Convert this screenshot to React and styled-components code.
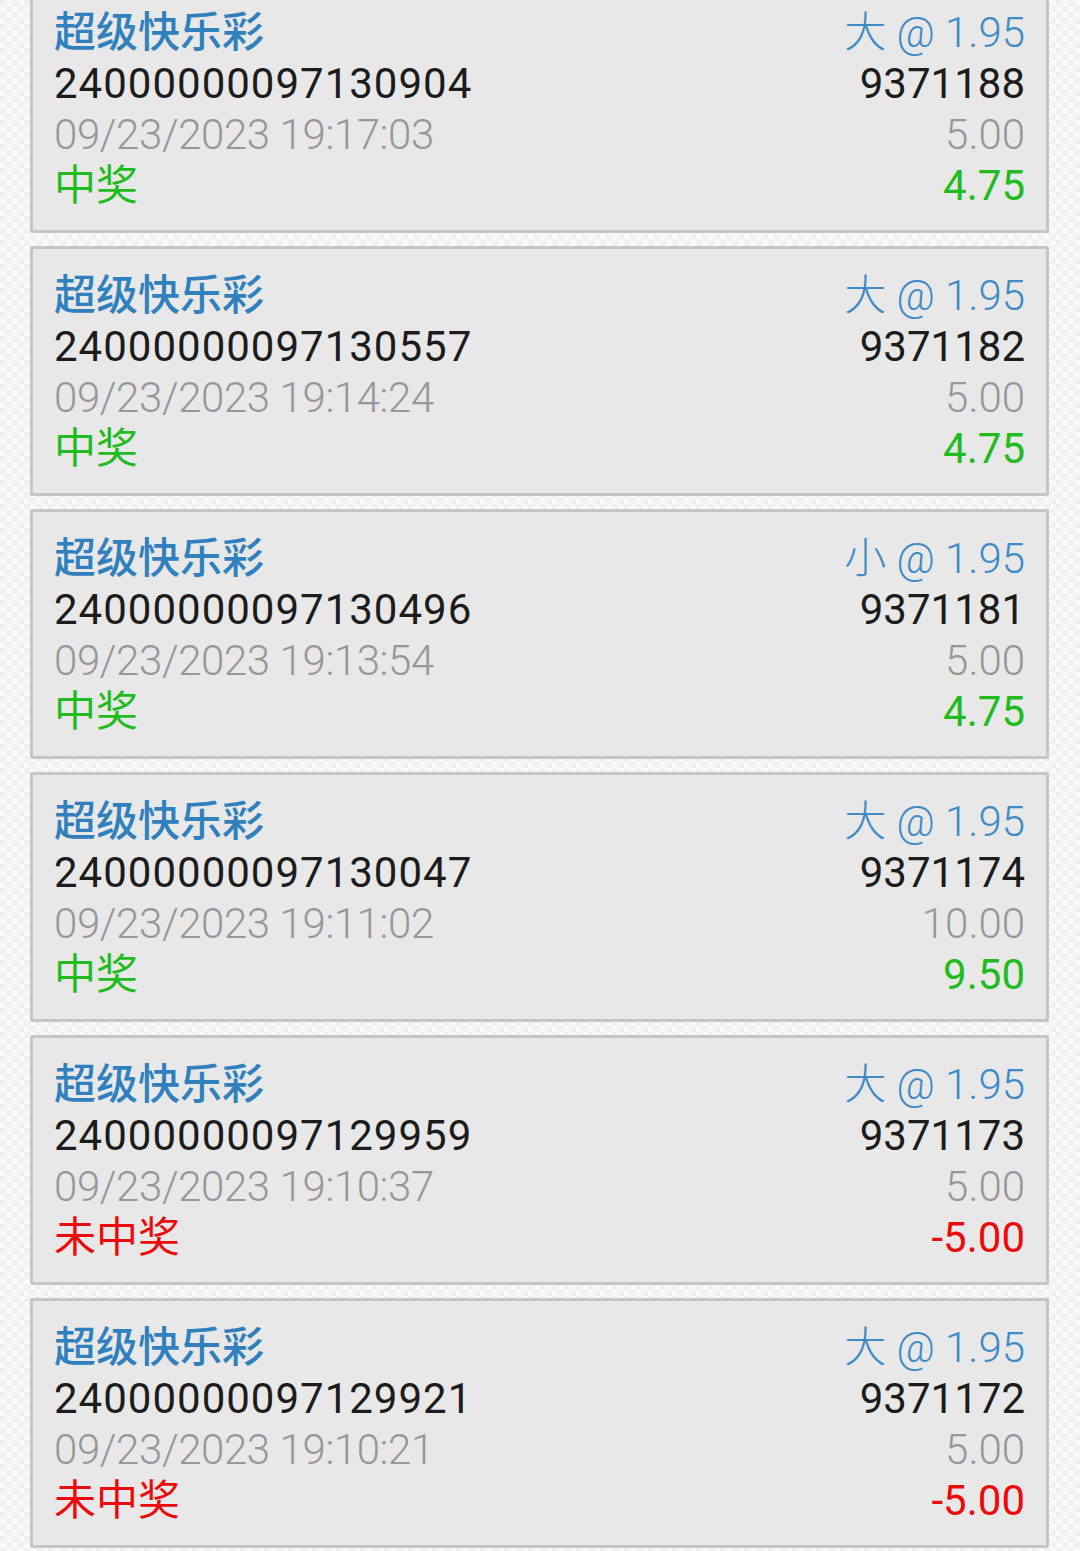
import React from "react";
import styled, { createGlobalStyle } from "styled-components";

const GlobalStyle = createGlobalStyle`
  html, body {
    margin: 0;
    padding: 0;
  }
  body {
    width: 1080px;
    height: 1551px;
    overflow: hidden;
    background-color: #f1f1f1;
    background-image:
      linear-gradient(45deg, rgba(255,255,255,0.55) 25%, transparent 25%, transparent 75%, rgba(255,255,255,0.55) 75%),
      linear-gradient(45deg, rgba(255,255,255,0.55) 25%, transparent 25%, transparent 75%, rgba(255,255,255,0.55) 75%);
    background-size: 12px 12px;
    background-position: 0 0, 6px 6px;
    font-family: Roboto, "Noto Sans CJK SC", sans-serif;
  }
`;

const List = styled.div`
  display: flex;
  flex-direction: column;
  gap: 13px;
  margin-top: -17px;
  padding: 0 31px 0 30px;
`;

const Card = styled.div`
  box-sizing: border-box;
  height: 250px;
  border: 3px solid #c6c6c6;
  border-radius: 2px;
  background: #e8e8e8;
  padding: 21px 21px 19px 21px;
  display: flex;
  justify-content: space-between;
`;

const Column = styled.div`
  display: flex;
  flex-direction: column;
  align-items: ${(p) => (p.$right ? "flex-end" : "flex-start")};
`;

const colors = {
  blue: "#3080be",
  lightBlue: "#3f8bc6",
  black: "#1c1c1c",
  gray: "#979797",
  green: "#1fbb1f",
  red: "#ee0a0a",
};

const Line = styled.div`
  font-family: ${(p) => (p.$light ? '"Roboto Light", Roboto' : "Roboto")}, "Noto Sans CJK SC", sans-serif;
  font-size: 42px;
  line-height: 51px;
  height: 51px;
  white-space: nowrap;
  color: ${(p) => colors[p.$tone]};
  font-weight: ${(p) => (p.$light ? 300 : p.$weight || 400)};
  letter-spacing: ${(p) => p.$spacing || "0"};
`;

const data = [
  { id: "24000000097130904", time: "09/23/2023 19:17:03", pick: "大", no: "9371188", stake: "5.00", win: true, result: "4.75" },
  { id: "24000000097130557", time: "09/23/2023 19:14:24", pick: "大", no: "9371182", stake: "5.00", win: true, result: "4.75" },
  { id: "24000000097130496", time: "09/23/2023 19:13:54", pick: "小", no: "9371181", stake: "5.00", win: true, result: "4.75" },
  { id: "24000000097130047", time: "09/23/2023 19:11:02", pick: "大", no: "9371174", stake: "10.00", win: true, result: "9.50" },
  { id: "24000000097129959", time: "09/23/2023 19:10:37", pick: "大", no: "9371173", stake: "5.00", win: false, result: "-5.00" },
  { id: "24000000097129921", time: "09/23/2023 19:10:21", pick: "大", no: "9371172", stake: "5.00", win: false, result: "-5.00" },
];

export default function App() {
  return (
    <>
      <GlobalStyle />
      <List>
        {data.map((d) => (
          <Card key={d.id}>
            <Column>
              <Line $tone="blue" $weight={500}>超级快乐彩</Line>
              <Line $tone="black" $spacing="1px">{d.id}</Line>
              <Line $tone="gray" $light $spacing="-0.4px">{d.time}</Line>
              <Line $tone={d.win ? "green" : "red"}>{d.win ? "中奖" : "未中奖"}</Line>
            </Column>
            <Column $right>
              <Line $tone="lightBlue" $light>{d.pick} @ 1.95</Line>
              <Line $tone="black">{d.no}</Line>
              <Line $tone="gray" $light>{d.stake}</Line>
              <Line $tone={d.win ? "green" : "red"}>{d.result}</Line>
            </Column>
          </Card>
        ))}
      </List>
    </>
  );
}
